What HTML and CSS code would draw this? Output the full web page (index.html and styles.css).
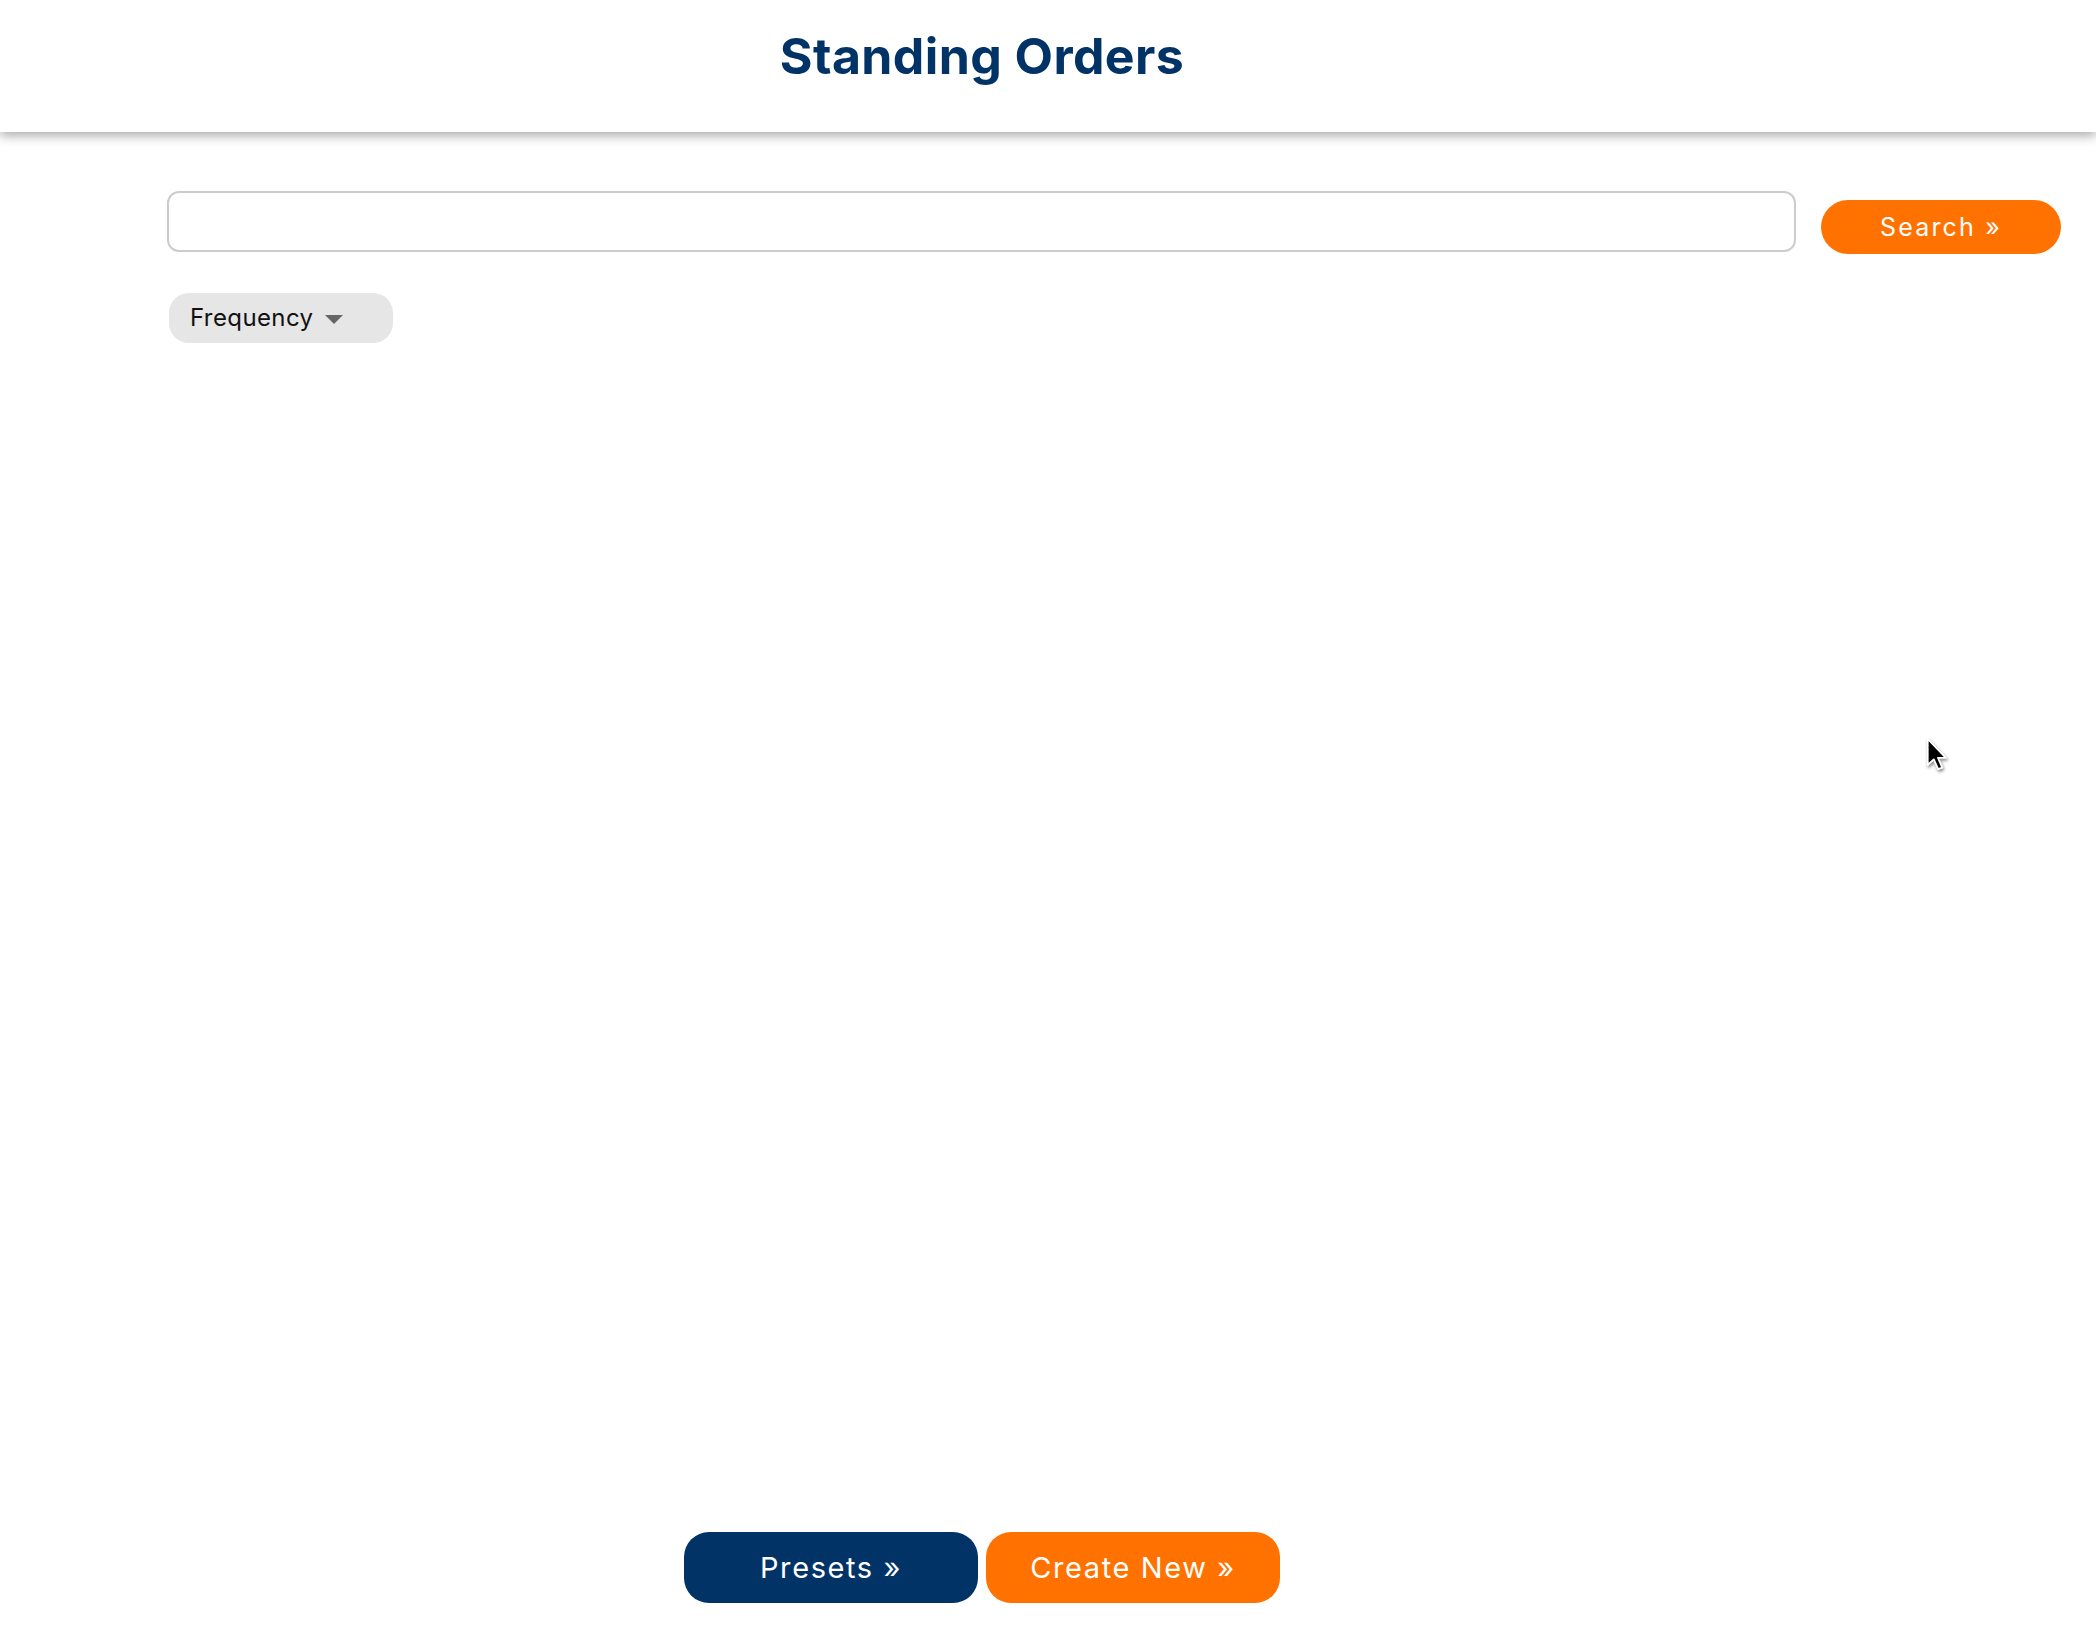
FILE: index.html
```html
<!DOCTYPE html>
<html lang="en">
<head>
<meta charset="utf-8">
<title>Standing Orders</title>
<link rel="stylesheet" href="styles.css">
</head>
<body>
<div class="page">
  <header class="topbar">
    <h1 class="title">Standing Orders</h1>
  </header>
  <main class="content">
    <div class="search-row">
      <input class="search-input" type="text" aria-label="Search">
      <button class="btn btn-search" type="button">Search »</button>
    </div>
    <div class="filters">
      <button class="filter-pill" type="button">
        <span class="filter-label">Frequency</span>
        <span class="caret"></span>
      </button>
    </div>
  </main>
  <footer class="actions">
    <button class="btn btn-large btn-navy" type="button">Presets »</button>
    <button class="btn btn-large btn-orange" type="button">Create New »</button>
  </footer>
  <svg class="cursor" width="22" height="34" viewBox="0 0 13 20" aria-hidden="true">
    <path d="M1 1 L1 16.5 L4.6 13.2 L7.2 19 L9.6 18 L7.1 12.3 L11.8 12.3 Z" fill="#000" stroke="#fff" stroke-width="1.1" stroke-linejoin="round"/>
  </svg>
</div>
</body>
</html>
```
FILE: styles.css
```css
* {
  box-sizing: border-box;
}

html, body {
  margin: 0;
  padding: 0;
  background: #ffffff;
}

body {
  font-family: Inter, "Noto Sans", "Liberation Sans", sans-serif;
  color: #111;
}

.page {
  position: relative;
  min-height: 100vh;
  display: flex;
  flex-direction: column;
}

.topbar {
  height: 132px;
  display: flex;
  justify-content: center;
  align-items: flex-start;
  padding-right: 132px;
  background: #fff;
  box-shadow: 0 4px 10px rgba(0, 0, 0, 0.32);
  position: relative;
  z-index: 1;
}

.title {
  margin: 0;
  padding-top: 26px;
  font-size: 50px;
  line-height: 60px;
  font-weight: 700;
  color: #023366;
  letter-spacing: 0.4px;
}

.content {
  padding: 59px 0 0 167px;
}

.search-row {
  display: flex;
  align-items: flex-start;
  gap: 25px;
}

.search-input {
  width: 1629px;
  height: 61px;
  border: 2px solid #cccccc;
  border-radius: 12px;
  background: #fff;
  font: inherit;
  font-size: 24px;
  padding: 0 16px;
  outline: none;
}

.btn {
  border: none;
  font-family: inherit;
  color: #fff;
  cursor: pointer;
  display: flex;
  align-items: center;
  justify-content: center;
  padding: 0;
}

.btn-search {
  margin-top: 9px;
  width: 240px;
  height: 54px;
  border-radius: 27px;
  background: #ff7200;
  font-size: 25px;
  font-weight: 400;
  letter-spacing: 2.2px;
}

.filters {
  margin-top: 39px;
  margin-left: 2px;
  display: flex;
}

.filter-pill {
  width: 224px;
  height: 50px;
  border: none;
  border-radius: 20px;
  background: #e6e6e6;
  display: flex;
  align-items: center;
  padding: 0 0 0 21px;
  font-family: inherit;
  font-size: 24px;
  letter-spacing: 0.4px;
  color: #111;
  gap: 12px;
}

.filter-label {
  line-height: 1;
}

.caret {
  width: 0;
  height: 0;
  border-left: 9.5px solid transparent;
  border-right: 9.5px solid transparent;
  border-top: 9px solid #666;
  margin-top: 2px;
}

.actions {
  margin-top: auto;
  padding: 0 132px 29px 0;
  display: flex;
  justify-content: center;
  gap: 8px;
}

.btn-large {
  width: 294px;
  height: 71px;
  border-radius: 25px;
  font-size: 29px;
  font-weight: 400;
  letter-spacing: 1.6px;
}

.btn-navy {
  background: #023366;
}

.btn-orange {
  background: #ff7200;
}

.cursor {
  position: absolute;
  left: 1926px;
  top: 737px;
  filter: drop-shadow(1px 2px 1.5px rgba(0, 0, 0, 0.45));
}
```
